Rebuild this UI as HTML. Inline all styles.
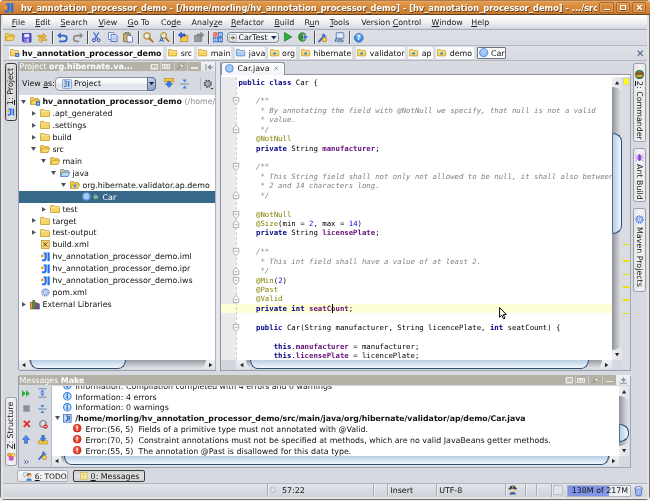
<!DOCTYPE html><html><head><meta charset='utf-8'><title>hv_annotation_processor_demo</title><style>
html,body{margin:0;padding:0;}
body{width:650px;height:501px;overflow:hidden;position:relative;background:#d6d9df;will-change:transform;font-family:'DejaVu Sans','Liberation Sans',sans-serif; font-size:7.9px;color:#1a1a1a;}
.a{position:absolute;}
.t{position:absolute;white-space:nowrap;line-height:10px;height:10px;}
.b{font-weight:bold;}
u{text-decoration:underline;}
.code{position:absolute;white-space:pre;font-family:'DejaVu Sans Mono','Liberation Mono',monospace; font-size:7.33px;line-height:9.43px;height:9.43px;color:#000;left:238.4px;}
.kw{color:#000080;font-weight:bold;}
.an{color:#808000;}
.fd{color:#660e7a;font-weight:bold;}
.cm{color:#808080;font-style:italic;}
.nm{color:#0000ff;}
.sep{position:absolute;width:1px;background:#8d929c;box-shadow:1px 0 0 #f4f5f7;}
.nav{position:absolute;top:47px;height:12px;background:#fbfbfc;border-radius:1px;}
svg{position:absolute;overflow:visible;}
</style></head><body>
<div class='a' style='left:0px;top:0px;width:650px;height:501px;background:#f3f3f3;'></div>
<div class='a' style='left:0.2px;top:0px;width:649.5px;height:499.8px;box-sizing:border-box;border:0.7px solid #707070;border-radius:4px;background:#d6d9df;'></div>
<div class='a' style='left:2.8px;top:15px;width:644.4px;height:14px;background:linear-gradient(#ffffff,#f4f5f7 40%,#dadde3 90%,#c9cdd5);'></div>
<div class='a' style='left:2.8px;top:29px;width:644.4px;height:1px;background:#a8adb8;'></div>
<div class='a' style='left:2.8px;top:30px;width:644.4px;height:15px;background:linear-gradient(#dcdfe5,#d7dae0);'></div>
<div class='a' style='left:2.8px;top:45px;width:644.4px;height:1px;background:#b4b9c3;'></div>
<div class='a' style='left:2.8px;top:46px;width:644.4px;height:13.7px;background:linear-gradient(#dde0e6,#d7dae0);'></div>
<div class='a' style='left:2.8px;top:59.7px;width:644.4px;height:0.9px;background:#b3b7c1;'></div>
<div class='a' style='left:2.8px;top:60.6px;width:644.4px;height:1.3px;background:#d9dce2;'></div>
<div class='a' style='left:1px;top:15px;width:1.8px;height:484px;background:#e4e4e4;'></div>
<div class='a' style='left:647.2px;top:15px;width:1.8px;height:484px;background:#e4e4e4;'></div>
<div class='a' style='left:1px;top:497.4px;width:648px;height:1.7px;background:#e4e4e4;border-radius:0 0 3px 3px;'></div>
<div class='a' style='left:0.2px;top:0px;width:649.5px;height:15px;background:linear-gradient(#6b4a2a 0,#f1ae6a 1px,#e09a50 2px,#d98c3c 6px,#d08234 11px,#c67a2e 13.5px,#5a3c20 14.6px);border-radius:4px 4px 0 0;'></div>
<svg style='left:4.2px;top:2.6px' width='10' height='10' viewBox='0 0 10 10'><path d='M2.4 0.3h3.4v6.3c0 2-1.2 3-3.1 3h-2v-2h1.7c.8 0 1.1-.4 1.1-1.1v-4.3h-1.1z' fill='#1f6df2'/><rect x='6.8' y='0.3' width='2.5' height='9.3' fill='#1f6df2'/><rect x='0.2' y='3' width='2.7' height='2.8' fill='#f59a1c'/></svg>
<div class='a' style='left:21px;top:2.6px;width:576px;height:11px;overflow:hidden;white-space:nowrap;font-weight:bold;color:#fff;font-size:8.25px;line-height:10px;text-shadow:0.6px 0.8px 0.5px #5a3a18;'>hv_annotation_processor_demo - [/home/morling/hv_annotation_processor_demo] - [hv_annotation_processor_demo] - .../src/main</div>
<div class='a' style='left:599.3px;top:2.2px;width:14.7px;height:10.7px;box-sizing:border-box;border:0.8px solid #a5652a;border-radius:2px;background:linear-gradient(#dc9044,#cb7e32);box-shadow:inset 0 0 0 0.8px rgba(240,180,120,0.75);'></div>
<div class='a' style='left:615.8px;top:2.2px;width:14.4px;height:10.7px;box-sizing:border-box;border:0.8px solid #a5652a;border-radius:2px;background:linear-gradient(#dc9044,#cb7e32);box-shadow:inset 0 0 0 0.8px rgba(240,180,120,0.75);'></div>
<div class='a' style='left:632px;top:2.2px;width:14.4px;height:10.7px;box-sizing:border-box;border:0.8px solid #a5652a;border-radius:2px;background:linear-gradient(#dc9044,#cb7e32);box-shadow:inset 0 0 0 0.8px rgba(240,180,120,0.75);'></div>
<div class='a' style='left:603.6px;top:8.9px;width:6px;height:1.5px;background:#fff;box-shadow:0 0.6px 0.4px #6a4018;'></div>
<div class='a' style='left:619.8px;top:4.6px;width:6.3px;height:5.6px;box-sizing:border-box;border:1.2px solid #fff;border-top-width:1.6px;box-shadow:0 0.6px 0.4px #6a4018;'></div>
<svg style='left:636px;top:4.2px' width='7' height='7' viewBox='0 0 7 7'><path d='M1 1l5 5M6 1l-5 5' stroke='#6a4018' stroke-width='1.6' transform='translate(0.3,0.5)'/><path d='M1 1l5 5M6 1l-5 5' stroke='#fff' stroke-width='1.5'/></svg>
<div class='t' style='left:11.8px;top:18.2px;color:#222;'><u>F</u>ile</div>
<div class='t' style='left:35.2px;top:18.2px;color:#222;'><u>E</u>dit</div>
<div class='t' style='left:60.6px;top:18.2px;color:#222;'><u>S</u>earch</div>
<div class='t' style='left:98.6px;top:18.2px;color:#222;'><u>V</u>iew</div>
<div class='t' style='left:127.6px;top:18.2px;color:#222;'><u>G</u>o To</div>
<div class='t' style='left:161px;top:18.2px;color:#222;'>Co<u>d</u>e</div>
<div class='t' style='left:191.6px;top:18.2px;color:#222;'>Analy<u>z</u>e</div>
<div class='t' style='left:231px;top:18.2px;color:#222;'><u>R</u>efactor</div>
<div class='t' style='left:274.4px;top:18.2px;color:#222;'><u>B</u>uild</div>
<div class='t' style='left:304.4px;top:18.2px;color:#222;'>R<u>u</u>n</div>
<div class='t' style='left:329.8px;top:18.2px;color:#222;'><u>T</u>ools</div>
<div class='t' style='left:361.2px;top:18.2px;color:#222;'>Version <u>C</u>ontrol</div>
<div class='t' style='left:431.6px;top:18.2px;color:#222;'><u>W</u>indow</div>
<div class='t' style='left:471.2px;top:18.2px;color:#222;'><u>H</u>elp</div>
<div class='sep' style='left:52.2px;top:30.8px;height:13.4px;background:#4d5057;box-shadow:1px 0 0 #f2f3f6;'></div>
<div class='sep' style='left:87.2px;top:30.8px;height:13.4px;background:#4d5057;box-shadow:1px 0 0 #f2f3f6;'></div>
<div class='sep' style='left:138.4px;top:30.8px;height:13.4px;background:#4d5057;box-shadow:1px 0 0 #f2f3f6;'></div>
<div class='sep' style='left:173.4px;top:30.8px;height:13.4px;background:#4d5057;box-shadow:1px 0 0 #f2f3f6;'></div>
<div class='sep' style='left:208px;top:30.8px;height:13.4px;background:#4d5057;box-shadow:1px 0 0 #f2f3f6;'></div>
<div class='sep' style='left:313.8px;top:30.8px;height:13.4px;background:#4d5057;box-shadow:1px 0 0 #f2f3f6;'></div>
<div class='sep' style='left:349.4px;top:30.8px;height:13.4px;background:#4d5057;box-shadow:1px 0 0 #f2f3f6;'></div>
<svg style='left:5px;top:33px' width='10' height='8' viewBox='0 0 10 8'><path d='M0.5 7.5V1.2q0-.7.7-.7h2.3l1 1.1h3.4q.6 0 .6.6V3' fill='#f3cf5e' stroke='#c39a2c' stroke-width='0.8'/><path d='M0.6 7.5L2.4 3.2h7.4L8 7.5z' fill='#f6d465' stroke='#c39a2c' stroke-width='0.8' stroke-linejoin='round'/></svg>
<svg style='left:22px;top:32.5px' width='9.5' height='9.5' viewBox='0 0 9.5 9.5'><path d='M0.5 0.5h8.5v8.5h-7.6l-.9-.9z' fill='#5b55d6' stroke='#2f2a9c' stroke-width='0.8'/><rect x='2.2' y='0.9' width='5' height='3.4' fill='#e9e9ff'/><rect x='2.6' y='5.8' width='4.2' height='3' fill='#cfcff5'/><rect x='3.3' y='6.3' width='1.3' height='2' fill='#4038b8'/></svg>
<svg style='left:37px;top:32.5px' width='10.5' height='10' viewBox='0 0 10.5 10'><path d='M1 3.6h5.2v-1.9l3.3 2.7-3.3 2.6v-1.8h-5.2z' fill='#f2bd2e' stroke='#b98414' stroke-width='0.6' transform='translate(0,-1.2)'/><path d='M9.6 3.6h-5.2v-1.9l-3.3 2.7 3.3 2.6v-1.8h5.2z' fill='#f7cf55' stroke='#b98414' stroke-width='0.6' transform='translate(0,2.4)'/></svg>
<svg style='left:57px;top:32px' width='10.5' height='10.5' viewBox='0 0 10.5 10.5'><path d='M3.2 3.6h3.4c2.2 0 3.2 1.2 3.2 2.9s-1.1 2.9-3.2 2.9h-4.6' fill='none' stroke='#2a62c9' stroke-width='1.7'/><path d='M0.2 3.6l3.6-3.2v6.4z' fill='#2a62c9'/></svg>
<svg style='left:72.5px;top:32px' width='10.5' height='10.5' viewBox='0 0 10.5 10.5'><g transform='translate(10.5,0) scale(-1,1)'><path d='M3.2 3.6h3.4c2.2 0 3.2 1.2 3.2 2.9s-1.1 2.9-3.2 2.9h-2.2' fill='none' stroke='#8c8c8c' stroke-width='1.7'/><path d='M0.2 3.6l3.6-3.2v6.4z' fill='#8c8c8c'/></g></svg>
<svg style='left:92.3px;top:32px' width='8.5' height='10.5' viewBox='0 0 8.5 10.5'><path d='M1.6 0.3l4.2 6.6M6.9 0.3l-4.2 6.6' stroke='#3a66c8' stroke-width='1.1' fill='none'/><circle cx='1.9' cy='8.2' r='1.5' fill='none' stroke='#2850b0' stroke-width='1'/><circle cx='6.6' cy='8.2' r='1.5' fill='none' stroke='#2850b0' stroke-width='1'/></svg>
<svg style='left:108px;top:32.3px' width='9.5' height='10' viewBox='0 0 9.5 10'><path d='M0.5 0.5h4.6l1.4 1.4v5.6h-6z' fill='#fff' stroke='#4a6cc0' stroke-width='0.8'/><path d='M3 2.6h4.6l1.4 1.4v5.5h-6z' fill='#e8efff' stroke='#3458b0' stroke-width='0.8'/><path d='M4.2 5h3.4M4.2 6.4h3.4M4.2 7.8h3.4' stroke='#6a86d0' stroke-width='0.5'/></svg>
<svg style='left:123px;top:32px' width='10' height='10.5' viewBox='0 0 10 10.5'><rect x='0.5' y='1.2' width='7' height='8.6' rx='0.8' fill='#d9b25a' stroke='#8c6a20' stroke-width='0.8'/><rect x='2.2' y='0.3' width='3.6' height='1.8' fill='#9aa' stroke='#566' stroke-width='0.5'/><path d='M4 3.6h4.2l1.3 1.3v5.1h-5.5z' fill='#f4f7ff' stroke='#3a5cb0' stroke-width='0.7'/></svg>
<svg style='left:143px;top:32px' width='10.5' height='10.5' viewBox='0 0 10.5 10.5'><circle cx='4' cy='4' r='3.1' fill='#cfe6ff' stroke='#c8921e' stroke-width='1.3'/><path d='M6.3 6.3l3.4 3.4' stroke='#b07814' stroke-width='1.9' stroke-linecap='round'/><circle cx='3.6' cy='3.4' r='1.2' fill='#fff' opacity='.8'/></svg>
<svg style='left:159px;top:32px' width='10.5' height='10.5' viewBox='0 0 10.5 10.5'><circle cx='4.6' cy='3.6' r='2.9' fill='#cfe6ff' stroke='#c8921e' stroke-width='1.2'/><path d='M6.6 5.8l3 3.3' stroke='#b07814' stroke-width='1.7' stroke-linecap='round'/><path d='M0.6 10l1.9-5 1.9 5M1.2 8.4h2.6' stroke='#2a58c0' stroke-width='0.9' fill='none'/></svg>
<svg style='left:178px;top:32.3px' width='10.5' height='10' viewBox='0 0 10.5 10'><rect x='2.6' y='3.6' width='7.2' height='6' fill='#f4c94a' stroke='#b98a1c' stroke-width='0.7'/><path d='M0.3 3l3.3-2.9v1.8h3.6v2.3h-3.6v1.8z' fill='#3b5fd8' stroke='#1e3a9c' stroke-width='0.5'/></svg>
<svg style='left:193.5px;top:32.3px' width='10.5' height='10' viewBox='0 0 10.5 10'><rect x='0.6' y='3.6' width='7.2' height='6' fill='#9a9a9a' stroke='#7a7a7a' stroke-width='0.7'/><path d='M10 3l-3.3-2.9v1.8h-3.6v2.3h3.6v1.8z' fill='#8c8c8c' stroke='#707070' stroke-width='0.5'/></svg>
<svg style='left:213px;top:32px' width='10' height='10.5' viewBox='0 0 10 10.5'><rect x='0.4' y='0.4' width='4' height='4' fill='#e8402c'/><path d='M1 1l2.8 2.8M3.8 1l-2.8 2.8' stroke='#ffd0c0' stroke-width='0.7'/><rect x='5.2' y='0.4' width='4.4' height='4.4' fill='#5a96ea' stroke='#2a58b0' stroke-width='0.5'/><rect x='0.4' y='5.6' width='4.2' height='4.4' fill='#5a96ea' stroke='#2a58b0' stroke-width='0.5'/><rect x='5.4' y='5.6' width='4.2' height='4.4' fill='#4a86e0' stroke='#2a58b0' stroke-width='0.5'/><path d='M6.4 1.4v2.4M8.2 1.4v2.4M1.6 6.6v2.4M3.4 6.6v2.4M6.6 6.6v2.4M8.4 6.6v2.4' stroke='#fff' stroke-width='0.7'/></svg>
<div class='a' style='left:226.8px;top:32.4px;width:51.8px;height:10.2px;box-sizing:border-box;border:0.8px solid #7f8794;border-radius:3.5px;background:linear-gradient(#fdfdfe,#eef0f4 50%,#dfe2e8);box-shadow:0 0.7px 0 #f3f4f6;'></div>
<svg style='left:228.6px;top:33.6px' width='7.6' height='7.6' viewBox='0 0 6.6 6.6'><rect x='0.3' y='0.3' width='6' height='6' rx='1' fill='#eef2f6' stroke='#8a98a8' stroke-width='0.6'/><path d='M1.2 3.3l2-1.6v3.2z' fill='#3a9a3a'/><path d='M5.4 3.3l-2-1.6v3.2z' fill='#d04030'/></svg>
<div class='t' style='left:238.4px;top:33.1px;color:#222;font-size:7.9px;'>CarTest</div>
<svg style='left:271.2px;top:35.8px' width='5.6' height='3.8' viewBox='0 0 6 4'><path d='M0 0h6l-3 3.6z' fill='#1f2f55'/></svg>
<svg style='left:284px;top:32.4px' width='8.5' height='9.8' viewBox='0 0 8.5 9.8'><path d='M0.5 0.5l7.4 4.4-7.4 4.4z' fill='#2fae3a' stroke='#1b7a25' stroke-width='0.7' stroke-linejoin='round'/></svg>
<svg style='left:298px;top:32.3px' width='11.5' height='10' viewBox='0 0 11.5 10'><ellipse cx='4.4' cy='5' rx='3.7' ry='4.2' fill='#49a84a' stroke='#1f6a28' stroke-width='0.8'/><path d='M2.2 2.2l4.4 5.6M6.6 2.2l-4.4 5.6M0.8 5h7.2' stroke='#1f5a28' stroke-width='0.6'/><path d='M5.6 2.2l5.2 2.8-5.2 2.8z' fill='#3a6ed8' stroke='#fff' stroke-width='0.5'/></svg>
<svg style='left:318px;top:32px' width='10.5' height='10.5' viewBox='0 0 10.5 10.5'><path d='M1.2 9.4l5.4-6' stroke='#3a62c0' stroke-width='2' stroke-linecap='round'/><path d='M5.2 1.6a2.4 2.4 0 1 0 3.6 2.6l-1.7.3-.8-1 .6-1.6z' fill='#4a74d0'/><circle cx='6.4' cy='7.6' r='2.3' fill='#f2c23a' stroke='#a87a14' stroke-width='0.6'/><circle cx='6.4' cy='7.6' r='0.8' fill='#fff6d0'/></svg>
<svg style='left:334px;top:32px' width='10.5' height='10.5' viewBox='0 0 10.5 10.5'><path d='M1.2 9.6l2-5.6' stroke='#3a62c0' stroke-width='1.4'/><rect x='2.2' y='0.6' width='7.6' height='5.8' rx='0.6' fill='#b9cdf0' stroke='#54709c' stroke-width='0.7'/><rect x='3.2' y='1.6' width='5.6' height='3.6' fill='#e6eefc'/><rect x='4' y='7' width='4.4' height='1.2' fill='#6a86b0'/><rect x='3' y='8.4' width='6.6' height='1.6' fill='#8aa0c8' stroke='#54709c' stroke-width='0.4'/></svg>
<svg style='left:354px;top:32.5px' width='9.6' height='9.6' viewBox='0 0 9.6 9.6'><circle cx='4.8' cy='4.8' r='4.3' fill='#3f8ee8' stroke='#1e58b0' stroke-width='0.8'/><circle cx='4.8' cy='3.6' r='3' fill='#8cc4ff' opacity='.55'/><text x='4.8' y='7.3' font-size='6.8' font-weight='bold' fill='#fff' text-anchor='middle' font-family='DejaVu Sans,Liberation Sans,sans-serif'>?</text></svg>
<div class='nav' style='left:9px;width:154px;'></div>
<svg style='left:10.4px;top:48.9px' width='9.2' height='7.4' viewBox='0 0 10 8'><path d='M0.5 7.5V1.2q0-.7.7-.7h2.4l1 1.2h4.2q.7 0 .7.7v5.1z' fill='#f6d465' stroke='#c39a2c' stroke-width='0.8' stroke-linejoin='round'/><path d='M1 2.6h8.2' stroke='#fdf0b8' stroke-width='0.7'/><rect x='6.2' y='4.8' width='3.6' height='3.6' fill='#2d7be0' stroke='#1b55a8' stroke-width='0.5'/><rect x='7.2' y='5.8' width='1.6' height='1.6' fill='#cfe4ff'/></svg>
<div class='t' style='left:22px;top:48.7px;font-weight:bold;color:#111;'>hv_annotation_processor_demo</div>
<div class='nav' style='left:167px;width:27px;'></div>
<svg style='left:168.4px;top:48.9px' width='9.2' height='7.4' viewBox='0 0 10 8'><path d='M0.5 7.5V1.2q0-.7.7-.7h2.4l1 1.2h4.2q.7 0 .7.7v5.1z' fill='#f6d465' stroke='#c39a2c' stroke-width='0.8' stroke-linejoin='round'/><path d='M1 2.6h8.2' stroke='#fdf0b8' stroke-width='0.7'/></svg>
<div class='t' style='left:180.7px;top:48.7px;color:#111;'>src</div>
<div class='nav' style='left:197px;width:34px;'></div>
<svg style='left:198.4px;top:48.9px' width='9.2' height='7.4' viewBox='0 0 10 8'><path d='M0.5 7.5V1.2q0-.7.7-.7h2.4l1 1.2h4.2q.7 0 .7.7v5.1z' fill='#f6d465' stroke='#c39a2c' stroke-width='0.8' stroke-linejoin='round'/><path d='M1 2.6h8.2' stroke='#fdf0b8' stroke-width='0.7'/></svg>
<div class='t' style='left:210.7px;top:48.7px;color:#111;'>main</div>
<div class='nav' style='left:235px;width:30px;'></div>
<svg style='left:236.4px;top:48.9px' width='9.2' height='7.4' viewBox='0 0 10 8'><path d='M0.5 7.5V1.2q0-.7.7-.7h2.4l1 1.2h4.2q.7 0 .7.7v5.1z' fill='#a9cdf5' stroke='#4b82c4' stroke-width='0.8' stroke-linejoin='round'/><path d='M1 2.6h8.2' stroke='#fdf0b8' stroke-width='0.7'/></svg>
<div class='t' style='left:248.7px;top:48.7px;color:#111;'>java</div>
<div class='nav' style='left:268.4px;width:27.6px;'></div>
<svg style='left:269.8px;top:48.9px' width='9.2' height='7.4' viewBox='0 0 10 8'><path d='M0.5 7.5V1.2q0-.7.7-.7h2.4l1 1.2h4.2q.7 0 .7.7v5.1z' fill='#f6d465' stroke='#c39a2c' stroke-width='0.8' stroke-linejoin='round'/><path d='M1 2.6h8.2' stroke='#fdf0b8' stroke-width='0.7'/><circle cx='5' cy='5' r='1.5' fill='#4a8ee0'/></svg>
<div class='t' style='left:282.1px;top:48.7px;color:#111;'>org</div>
<div class='nav' style='left:299.6px;width:52.4px;'></div>
<svg style='left:301px;top:48.9px' width='9.2' height='7.4' viewBox='0 0 10 8'><path d='M0.5 7.5V1.2q0-.7.7-.7h2.4l1 1.2h4.2q.7 0 .7.7v5.1z' fill='#f6d465' stroke='#c39a2c' stroke-width='0.8' stroke-linejoin='round'/><path d='M1 2.6h8.2' stroke='#fdf0b8' stroke-width='0.7'/><circle cx='5' cy='5' r='1.5' fill='#4a8ee0'/></svg>
<div class='t' style='left:313.3px;top:48.7px;color:#111;'>hibernate</div>
<div class='nav' style='left:356px;width:49px;'></div>
<svg style='left:357.4px;top:48.9px' width='9.2' height='7.4' viewBox='0 0 10 8'><path d='M0.5 7.5V1.2q0-.7.7-.7h2.4l1 1.2h4.2q.7 0 .7.7v5.1z' fill='#f6d465' stroke='#c39a2c' stroke-width='0.8' stroke-linejoin='round'/><path d='M1 2.6h8.2' stroke='#fdf0b8' stroke-width='0.7'/><circle cx='5' cy='5' r='1.5' fill='#4a8ee0'/></svg>
<div class='t' style='left:369.7px;top:48.7px;color:#111;'>validator</div>
<div class='nav' style='left:408px;width:25px;'></div>
<svg style='left:409.4px;top:48.9px' width='9.2' height='7.4' viewBox='0 0 10 8'><path d='M0.5 7.5V1.2q0-.7.7-.7h2.4l1 1.2h4.2q.7 0 .7.7v5.1z' fill='#f6d465' stroke='#c39a2c' stroke-width='0.8' stroke-linejoin='round'/><path d='M1 2.6h8.2' stroke='#fdf0b8' stroke-width='0.7'/><circle cx='5' cy='5' r='1.5' fill='#4a8ee0'/></svg>
<div class='t' style='left:421.7px;top:48.7px;color:#111;'>ap</div>
<div class='nav' style='left:436px;width:38px;'></div>
<svg style='left:437.4px;top:48.9px' width='9.2' height='7.4' viewBox='0 0 10 8'><path d='M0.5 7.5V1.2q0-.7.7-.7h2.4l1 1.2h4.2q.7 0 .7.7v5.1z' fill='#f6d465' stroke='#c39a2c' stroke-width='0.8' stroke-linejoin='round'/><path d='M1 2.6h8.2' stroke='#fdf0b8' stroke-width='0.7'/><circle cx='5' cy='5' r='1.5' fill='#4a8ee0'/></svg>
<div class='t' style='left:449.7px;top:48.7px;color:#111;'>demo</div>
<div class='a' style='left:476.6px;top:46.6px;width:29px;height:12.6px;box-sizing:border-box;border:0.8px solid #6d7480;background:#fbfbfc;border-radius:1px;'></div>
<svg style='left:479.4px;top:48.4px' width='9.4' height='9.4' viewBox='0 0 9 9'><circle cx='4.5' cy='4.5' r='4' fill='#86b6f0' stroke='#4a8ae0' stroke-width='0.8'/><circle cx='4.5' cy='3.6' r='2.6' fill='#b8d6f8' opacity='.6'/><path d='M6.1 3.3a2 2 0 1 0 0 2.4' fill='none' stroke='#fff' stroke-width='1.1'/><path d='M6.1 3.3a2 2 0 1 0 0 2.4' fill='none' stroke='#3a7ad8' stroke-width='0.55'/></svg>
<div class='t' style='left:491px;top:48.9px;color:#111;'>Car</div>
<svg style='left:637.2px;top:49.6px' width='6.4' height='6.4' viewBox='0 0 6.4 6.4'><path d='M0.6 0.6l5.2 5.2M5.8 0.6l-5.2 5.2' stroke='#4a648c' stroke-width='1.1'/></svg>
<div class='a' style='left:5.3px;top:62.8px;width:11.7px;height:58.2px;box-sizing:border-box;border:0.9px solid #3c3c3c;border-radius:2.5px;background:linear-gradient(90deg,#cfcfcf,#e4e4e4 50%,#d2d2d2);'></div>
<div class='a' style='left:11.15px;top:91.9px;width:0;height:0;'><div style='position:absolute;white-space:nowrap;line-height:10px;height:10px;width:58.2px;left:-29.1px;top:-5px;transform:rotate(-90deg);text-align:left;color:#111;font-size:7.9px;'></div></div>
<div class='a' style='left:11.2px;top:105px;width:0;height:0;'><div style='position:absolute;white-space:nowrap;line-height:10px;height:10px;left:0;top:-5px;transform-origin:0 50%;transform:rotate(-90deg);color:#111;font-size:7.9px;'><u>1</u>: Project</div></div>
<svg style='left:7.2px;top:107.6px' width='8' height='8' viewBox='0 0 8 8'><path d='M1.6 0.6h3v4.6c0 1.5-.8 2.2-2.2 2.2h-1.6v-1.4h1.4c.6 0 .9-.3.9-.9v-3.1h-1.5z' fill='#1e6cf0'/><rect x='5.6' y='0.6' width='1.5' height='6.8' fill='#1e6cf0'/><rect x='0.6' y='2.6' width='1.9' height='1.9' fill='#f39a1e'/></svg>
<div class='a' style='left:18.4px;top:61.9px;width:0.8px;height:307.9px;background:#9aa0ab;'></div>
<div class='a' style='left:19px;top:61.9px;width:182.4px;height:9.3px;background:#b4b2a7;'></div>
<div class='a' style='left:201.4px;top:61.9px;width:14px;height:9.3px;background:#dcdfe5;'></div>
<div class='t' style='left:19.6px;top:62.2px;color:#fff;font-size:7.9px;'>Project <b>org.hibernate.va...</b></div>
<div class='a' style='left:159.8px;top:62.2px;width:0.9px;height:8.6px;background:#cdcbc2;'></div>
<div class='a' style='left:173.6px;top:62.2px;width:0.9px;height:8.6px;background:#cdcbc2;'></div>
<div class='a' style='left:187px;top:62.2px;width:0.9px;height:8.6px;background:#cdcbc2;'></div>
<div class='a' style='left:150.8px;top:63.7px;width:7px;height:5.6px;box-sizing:border-box;border:0.7px solid #ecebe6;background:#c4c2b8;box-shadow:-0.6px 0.7px 0 #dddcd5;'></div>
<div class='a' style='left:162.4px;top:63.9px;width:7.6px;height:5.2px;box-sizing:border-box;border:0.7px solid #ecebe6;background:#c2c0b6;'></div>
<div class='a' style='left:164.4px;top:65.4px;width:3.6px;height:2.2px;box-sizing:border-box;border:0.5px solid #e4e3dd;'></div>
<svg style='left:177.2px;top:63.4px' width='7' height='6.6' viewBox='0 0 7 6.6'><path d='M0.5 6.2l2.6-2.6' stroke='#6a6960' stroke-width='0.8'/><path d='M2.6 2.2l2.2 2.2M4 0.6l2.2 2.2' stroke='#5a5950' stroke-width='0.7'/><path d='M3 2.6l1.6-1.4 1.4 1.4-1.4 1.6z' fill='#efeeea'/></svg>
<div class='a' style='left:190.8px;top:67px;width:7.2px;height:1.7px;background:#e9e8e3;'></div>
<div class='a' style='left:201.4px;top:61.9px;width:14px;height:9.3px;background:linear-gradient(#f1f2f5,#e6e8ec);'></div>
<svg style='left:205.4px;top:63.8px' width='8.6' height='6.6' viewBox='0 0 8.6 6.6'><path d='M8.4 3.3h-5M5.4 1l-2.4 2.3 2.4 2.3z' stroke='#868c96' fill='#868c96' stroke-width='0.9'/><path d='M1 0.2v6.2' stroke='#868c96' stroke-width='1'/></svg>
<div class='t' style='left:22px;top:79.1px;color:#111;'>View <u>a</u>s:</div>
<div class='a' style='left:55.4px;top:76.9px;width:101px;height:13.7px;box-sizing:border-box;border:0.8px solid #8a92a0;border-radius:4px;background:linear-gradient(#ffffff,#f2f4f7 45%,#dfe3ea 55%,#e6e9ee);box-shadow:0 0.8px 0 #eceef2;'></div>
<div class='a' style='left:146.6px;top:76.9px;width:9.8px;height:13.7px;box-sizing:border-box;border:0.8px solid #5d6f8c;border-radius:0 4px 4px 0;background:linear-gradient(#c4d3e6,#a3b8d3 50%,#8ea6c6);'></div>
<svg style='left:149px;top:82.2px' width='5' height='3.4' viewBox='0 0 5 3.4'><path d='M0 0h5l-2.5 3.2z' fill='#1c2433'/></svg>
<svg style='left:62px;top:78.8px' width='10' height='10' viewBox='0 0 10 10'><rect x='0.5' y='0.5' width='9' height='9' rx='1' fill='#cfe0f6' stroke='#6f94c8' stroke-width='0.7'/><path d='M2.2 2h2v4c0 1-.6 1.6-1.6 1.6h-.6' fill='none' stroke='#3a74d0' stroke-width='1.1'/><rect x='5.8' y='2' width='1.5' height='5.8' fill='#3a74d0'/><rect x='2' y='3.6' width='1.6' height='1.6' fill='#f0a030'/></svg>
<div class='t' style='left:74px;top:79.1px;color:#111;'>Project</div>
<svg style='left:164px;top:78.2px' width='10.5' height='10' viewBox='0 0 10.5 10'><rect x='0.4' y='0.4' width='9.4' height='3.4' fill='#f4c83e' stroke='#b98a1c' stroke-width='0.6'/><path d='M5 9.6l-3.6-4h2.2v-2.2h2.8v2.2h2.2z' fill='#3b7be0' stroke='#1e4ea8' stroke-width='0.5'/></svg>
<svg style='left:180px;top:78.6px' width='9.4' height='10' viewBox='0 0 9.4 10'><path d='M0.4 5h8.6' stroke='#6b7f9c' stroke-width='0.9'/><path d='M4.7 3.6l-2.2-3h4.4zM4.7 6.4l-2.2 3h4.4z' fill='#3b8be0'/></svg>
<svg style='left:202.8px;top:79.2px' width='10.6' height='11' viewBox='0 0 10.6 11'><circle cx='4.8' cy='4.8' r='3.2' fill='none' stroke='#4a4f58' stroke-width='1.9' stroke-dasharray='1.5 1'/><circle cx='4.8' cy='4.8' r='2.6' fill='#cfd3da' stroke='#4a4f58' stroke-width='0.8'/><circle cx='4.8' cy='4.8' r='1.1' fill='#f2f3f5' stroke='#4a4f58' stroke-width='0.6'/><path d='M7.6 9h2.8l-1.4 1.6z' fill='#222'/></svg>
<div class='a' style='left:200px;top:78px;width:0.8px;height:11.6px;background:#b4b8c2;'></div>
<div class='a' style='left:19px;top:95.4px;width:196.4px;height:264.6px;background:#fff;'></div>
<div class='a' style='left:215.4px;top:61.9px;width:0.6px;height:307.9px;background:#aeb3bd;'></div>
<div class='a' style='left:19px;top:95.4px;width:196.4px;height:264.6px;overflow:hidden;'><div class='a' style='left:-19px;top:-95.4px;width:650px;height:501px;'>
<svg style='left:20.9px;top:99.765px' width='5' height='4' viewBox='0 0 5 4'><path d='M0 0h5l-2.5 4z' fill='#4f555e'/></svg>
<svg style='left:30px;top:97.365px' width='10' height='8' viewBox='0 0 10 8'><path d='M0.5 7.5V1.2q0-.7.7-.7h2.3l1 1.1h3.4q.6 0 .6.6V3' fill='#f3cf5e' stroke='#c39a2c' stroke-width='0.8'/><path d='M0.6 7.5L2.4 3.2h7.4L8 7.5z' fill='#f6d465' stroke='#c39a2c' stroke-width='0.8' stroke-linejoin='round'/><rect x='6.2' y='4.8' width='3.6' height='3.6' fill='#2d7be0' stroke='#1b55a8' stroke-width='0.5'/><rect x='7.2' y='5.8' width='1.6' height='1.6' fill='#cfe4ff'/></svg>
<div class='t' style='left:42.4px;top:97.265px;color:#111;font-size:7.9px;'><b>hv_annotation_processor_demo</b> <span style='color:#8c8c8c'>(/home/morling/hv_annotation_processor_demo)</span></div>
<svg style='left:31.6px;top:111.095px' width='4' height='4.8' viewBox='0 0 4 4.8'><path d='M0 0v4.8l4-2.4z' fill='#4f555e'/></svg>
<svg style='left:40px;top:109.295px' width='10' height='8' viewBox='0 0 10 8'><path d='M0.5 7.5V1.2q0-.7.7-.7h2.4l1 1.2h4.2q.7 0 .7.7v5.1z' fill='#f6d465' stroke='#c39a2c' stroke-width='0.8' stroke-linejoin='round'/><path d='M1 2.6h8.2' stroke='#fdf0b8' stroke-width='0.7'/></svg>
<div class='t' style='left:52.4px;top:109.195px;color:#111;font-size:7.9px;'>.apt_generated</div>
<svg style='left:31.6px;top:123.025px' width='4' height='4.8' viewBox='0 0 4 4.8'><path d='M0 0v4.8l4-2.4z' fill='#4f555e'/></svg>
<svg style='left:40px;top:121.225px' width='10' height='8' viewBox='0 0 10 8'><path d='M0.5 7.5V1.2q0-.7.7-.7h2.4l1 1.2h4.2q.7 0 .7.7v5.1z' fill='#f6d465' stroke='#c39a2c' stroke-width='0.8' stroke-linejoin='round'/><path d='M1 2.6h8.2' stroke='#fdf0b8' stroke-width='0.7'/></svg>
<div class='t' style='left:52.4px;top:121.125px;color:#111;font-size:7.9px;'>.settings</div>
<svg style='left:31.6px;top:134.955px' width='4' height='4.8' viewBox='0 0 4 4.8'><path d='M0 0v4.8l4-2.4z' fill='#4f555e'/></svg>
<svg style='left:40px;top:133.155px' width='10' height='8' viewBox='0 0 10 8'><path d='M0.5 7.5V1.2q0-.7.7-.7h2.4l1 1.2h4.2q.7 0 .7.7v5.1z' fill='#f6d465' stroke='#c39a2c' stroke-width='0.8' stroke-linejoin='round'/><path d='M1 2.6h8.2' stroke='#fdf0b8' stroke-width='0.7'/></svg>
<div class='t' style='left:52.4px;top:133.055px;color:#111;font-size:7.9px;'>build</div>
<svg style='left:30.9px;top:147.485px' width='5' height='4' viewBox='0 0 5 4'><path d='M0 0h5l-2.5 4z' fill='#4f555e'/></svg>
<svg style='left:40px;top:145.085px' width='10' height='8' viewBox='0 0 10 8'><path d='M0.5 7.5V1.2q0-.7.7-.7h2.3l1 1.1h3.4q.6 0 .6.6V3' fill='#f3cf5e' stroke='#c39a2c' stroke-width='0.8'/><path d='M0.6 7.5L2.4 3.2h7.4L8 7.5z' fill='#f6d465' stroke='#c39a2c' stroke-width='0.8' stroke-linejoin='round'/></svg>
<div class='t' style='left:52.4px;top:144.985px;color:#111;font-size:7.9px;'>src</div>
<svg style='left:40.9px;top:159.415px' width='5' height='4' viewBox='0 0 5 4'><path d='M0 0h5l-2.5 4z' fill='#4f555e'/></svg>
<svg style='left:50px;top:157.015px' width='10' height='8' viewBox='0 0 10 8'><path d='M0.5 7.5V1.2q0-.7.7-.7h2.3l1 1.1h3.4q.6 0 .6.6V3' fill='#f3cf5e' stroke='#c39a2c' stroke-width='0.8'/><path d='M0.6 7.5L2.4 3.2h7.4L8 7.5z' fill='#f6d465' stroke='#c39a2c' stroke-width='0.8' stroke-linejoin='round'/></svg>
<div class='t' style='left:62.4px;top:156.915px;color:#111;font-size:7.9px;'>main</div>
<svg style='left:50.9px;top:171.345px' width='5' height='4' viewBox='0 0 5 4'><path d='M0 0h5l-2.5 4z' fill='#4f555e'/></svg>
<svg style='left:60px;top:168.945px' width='10' height='8' viewBox='0 0 10 8'><path d='M0.5 7.5V1.2q0-.7.7-.7h2.3l1 1.1h3.4q.6 0 .6.6V3' fill='#f3cf5e' stroke='#4b82c4' stroke-width='0.8'/><path d='M0.6 7.5L2.4 3.2h7.4L8 7.5z' fill='#b7d6f8' stroke='#4b82c4' stroke-width='0.8' stroke-linejoin='round'/></svg>
<div class='t' style='left:72.4px;top:168.845px;color:#111;font-size:7.9px;'>java</div>
<svg style='left:60.9px;top:183.275px' width='5' height='4' viewBox='0 0 5 4'><path d='M0 0h5l-2.5 4z' fill='#4f555e'/></svg>
<svg style='left:70px;top:180.875px' width='10' height='8' viewBox='0 0 10 8'><path d='M0.5 7.5V1.2q0-.7.7-.7h2.3l1 1.1h3.4q.6 0 .6.6V3' fill='#f3cf5e' stroke='#c39a2c' stroke-width='0.8'/><path d='M0.6 7.5L2.4 3.2h7.4L8 7.5z' fill='#f6d465' stroke='#c39a2c' stroke-width='0.8' stroke-linejoin='round'/><circle cx='5' cy='5' r='1.5' fill='#4a8ee0'/></svg>
<div class='t' style='left:82.4px;top:180.775px;color:#111;font-size:7.9px;'>org.hibernate.validator.ap.demo</div>
<div class='a' style='left:19px;top:190.64px;width:196.4px;height:12.13px;background:#39698a;'></div>
<svg style='left:82px;top:192.405px' width='8.8' height='8.8' viewBox='0 0 9 9'><circle cx='4.5' cy='4.5' r='4' fill='#86b6f0' stroke='#4a8ae0' stroke-width='0.8'/><circle cx='4.5' cy='3.6' r='2.6' fill='#b8d6f8' opacity='.6'/><path d='M6.1 3.3a2 2 0 1 0 0 2.4' fill='none' stroke='#fff' stroke-width='1.1'/><path d='M6.1 3.3a2 2 0 1 0 0 2.4' fill='none' stroke='#3a7ad8' stroke-width='0.55'/></svg>
<svg style='left:93.6px;top:195.405px' width='4.2' height='3.4' viewBox='0 0 4.2 3.4'><rect x='0' y='1.2' width='3.4' height='2.2' fill='#5fc05a' stroke='#d8f0d8' stroke-width='0.4'/><path d='M0.6 1.2v-0.4a1.1 1.1 0 0 1 2.2 0' fill='none' stroke='#cfe' stroke-width='0.5'/></svg>
<div class='t' style='left:102.6px;top:192.705px;color:#fff;font-size:7.9px;'>Car</div>
<svg style='left:41.6px;top:206.535px' width='4' height='4.8' viewBox='0 0 4 4.8'><path d='M0 0v4.8l4-2.4z' fill='#4f555e'/></svg>
<svg style='left:50px;top:204.735px' width='10' height='8' viewBox='0 0 10 8'><path d='M0.5 7.5V1.2q0-.7.7-.7h2.4l1 1.2h4.2q.7 0 .7.7v5.1z' fill='#f6d465' stroke='#c39a2c' stroke-width='0.8' stroke-linejoin='round'/><path d='M1 2.6h8.2' stroke='#fdf0b8' stroke-width='0.7'/></svg>
<div class='t' style='left:62.4px;top:204.635px;color:#111;font-size:7.9px;'>test</div>
<svg style='left:31.6px;top:218.465px' width='4' height='4.8' viewBox='0 0 4 4.8'><path d='M0 0v4.8l4-2.4z' fill='#4f555e'/></svg>
<svg style='left:40px;top:216.665px' width='10' height='8' viewBox='0 0 10 8'><path d='M0.5 7.5V1.2q0-.7.7-.7h2.4l1 1.2h4.2q.7 0 .7.7v5.1z' fill='#f6d465' stroke='#c39a2c' stroke-width='0.8' stroke-linejoin='round'/><path d='M1 2.6h8.2' stroke='#fdf0b8' stroke-width='0.7'/></svg>
<div class='t' style='left:52.4px;top:216.565px;color:#111;font-size:7.9px;'>target</div>
<svg style='left:31.6px;top:230.395px' width='4' height='4.8' viewBox='0 0 4 4.8'><path d='M0 0v4.8l4-2.4z' fill='#4f555e'/></svg>
<svg style='left:40px;top:228.595px' width='10' height='8' viewBox='0 0 10 8'><path d='M0.5 7.5V1.2q0-.7.7-.7h2.4l1 1.2h4.2q.7 0 .7.7v5.1z' fill='#f6d465' stroke='#c39a2c' stroke-width='0.8' stroke-linejoin='round'/><path d='M1 2.6h8.2' stroke='#fdf0b8' stroke-width='0.7'/></svg>
<div class='t' style='left:52.4px;top:228.495px;color:#111;font-size:7.9px;'>test-output</div>
<svg style='left:41px;top:240.125px' width='8.6' height='8.8' viewBox='0 0 8.6 8.8'><rect x='0.4' y='0.4' width='7.8' height='8' fill='#f6d774' stroke='#b98a1c' stroke-width='0.7'/><path d='M2.4 2.4l3.8 4M6.2 2.4l-3.8 4' stroke='#5a3c10' stroke-width='1'/></svg>
<div class='t' style='left:52.4px;top:240.425px;color:#111;font-size:7.9px;'>build.xml</div>
<svg style='left:41px;top:251.755px' width='9' height='9.4' viewBox='0 0 9 9.4'><path d='M2.6 0.4h3.1v6c0 1.9-1.1 2.8-2.9 2.8h-1.7v-1.9h1.5c.7 0 1-.3 1-1v-4.1h-1z' fill='#1f6df2'/><rect x='6.5' y='0.4' width='2.2' height='8.8' fill='#1f6df2'/><rect x='0.1' y='2.6' width='2.5' height='2.6' fill='#f59a1c'/></svg>
<div class='t' style='left:52.4px;top:252.355px;color:#111;font-size:7.9px;'>hv_annotation_processor_demo.iml</div>
<svg style='left:41px;top:263.685px' width='9' height='9.4' viewBox='0 0 9 9.4'><path d='M2.6 0.4h3.1v6c0 1.9-1.1 2.8-2.9 2.8h-1.7v-1.9h1.5c.7 0 1-.3 1-1v-4.1h-1z' fill='#1f6df2'/><rect x='6.5' y='0.4' width='2.2' height='8.8' fill='#1f6df2'/><rect x='0.1' y='2.6' width='2.5' height='2.6' fill='#f59a1c'/></svg>
<div class='t' style='left:52.4px;top:264.285px;color:#111;font-size:7.9px;'>hv_annotation_processor_demo.ipr</div>
<svg style='left:41px;top:275.615px' width='9' height='9.4' viewBox='0 0 9 9.4'><path d='M2.6 0.4h3.1v6c0 1.9-1.1 2.8-2.9 2.8h-1.7v-1.9h1.5c.7 0 1-.3 1-1v-4.1h-1z' fill='#1f6df2'/><rect x='6.5' y='0.4' width='2.2' height='8.8' fill='#1f6df2'/><rect x='0.1' y='2.6' width='2.5' height='2.6' fill='#f59a1c'/></svg>
<div class='t' style='left:52.4px;top:276.215px;color:#111;font-size:7.9px;'>hv_annotation_processor_demo.iws</div>
<svg style='left:41px;top:287.845px' width='8.8' height='8.8' viewBox='0 0 8.8 8.8'><circle cx='4.4' cy='4.4' r='3.5' fill='#dbe6fa' stroke='#5a82d8' stroke-width='1.3' stroke-dasharray='1.2 0.7'/><circle cx='4.4' cy='4.4' r='2.2' fill='#fff' stroke='#5a82d8' stroke-width='0.7'/><circle cx='4.4' cy='4.4' r='0.9' fill='#7aa0e8'/></svg>
<div class='t' style='left:52.4px;top:288.145px;color:#111;font-size:7.9px;'>pom.xml</div>
<svg style='left:21.6px;top:301.975px' width='4' height='4.8' viewBox='0 0 4 4.8'><path d='M0 0v4.8l4-2.4z' fill='#4f555e'/></svg>
<svg style='left:30px;top:299.575px' width='10' height='9.4' viewBox='0 0 10 9.4'><rect x='0.4' y='2.2' width='2' height='6.8' fill='#e0a030' stroke='#6a4a10' stroke-width='0.5'/><rect x='2.8' y='0.4' width='2' height='8.6' fill='#4a9a4a' stroke='#1e4e1e' stroke-width='0.5'/><rect x='5.2' y='2.8' width='2' height='6.2' fill='#d04a3a' stroke='#6a1e14' stroke-width='0.5'/><rect x='7.4' y='3.8' width='2' height='5.2' fill='#4a6ad0' stroke='#1e2e7a' stroke-width='0.5'/></svg>
<div class='t' style='left:42.4px;top:300.075px;color:#111;font-size:7.9px;'>External Libraries</div>
</div></div>
<div class='a' style='left:19px;top:360.2px;width:196.4px;height:9.2px;background:linear-gradient(#eceef1,#e2e4e9);'></div>
<div class='a' style='left:28.6px;top:360.2px;width:177.2px;height:8.6px;background:linear-gradient(#969aa1,#b4b7be 35%,#d4d6db 75%,#e2e4e8);border-radius:0 0 7px 7px / 0 0 9.2px 9.2px;'></div>
<svg style='left:22.4px;top:362.7px' width='3.4' height='4.2' viewBox='0 0 3.4 4.2'><path d='M3.4 0v4.2l-3.4-2.1z' fill='#20242c'/></svg>
<svg style='left:208.6px;top:362.7px' width='3.4' height='4.2' viewBox='0 0 3.4 4.2'><path d='M0 0v4.2l3.4-2.1z' fill='#20242c'/></svg>
<div class='a' style='left:29.6px;top:360.2px;width:96px;height:8.6px;box-sizing:border-box;border:1px solid #2f4f72;border-top:none;border-radius:0 0 8px 8px / 0 0 9.2px 9.2px;background:linear-gradient(#b9cde4,#d4e2f1 50%,#f2f7fc);'></div>
<div class='a' style='left:19px;top:369.6px;width:197px;height:0.7px;background:#9aa0ab;'></div>
<div class='a' style='left:216px;top:61.9px;width:4.4px;height:307.9px;background:#e4e6eb;'></div>
<div class='a' style='left:220.4px;top:61.9px;width:410.6px;height:12.6px;background:linear-gradient(#d8dbe1,#d4d7dd);'></div>
<div class='a' style='left:220.4px;top:61.9px;width:0.8px;height:307.9px;background:#8e939d;'></div>
<div class='a' style='left:630.2px;top:74.4px;width:0.8px;height:295.4px;background:#a2a7b1;'></div>
<div class='a' style='left:221.2px;top:61.9px;width:64.2px;height:13.6px;box-sizing:border-box;border:0.8px solid #8e939d;border-bottom:none;border-radius:3px 3px 0 0;background:linear-gradient(#fdfdfe,#f4f5f7);'></div>
<div class='a' style='left:285.2px;top:74.4px;width:345.8px;height:0.9px;background:#8e939d;'></div>
<div class='a' style='left:221.2px;top:75.3px;width:409px;height:1.4px;background:#fff;'></div>
<div class='a' style='left:221.2px;top:76.6px;width:409px;height:0.8px;background:#d2d2d4;'></div>
<svg style='left:224.8px;top:63.9px' width='8.8' height='8.8' viewBox='0 0 9 9'><circle cx='4.5' cy='4.5' r='4' fill='#86b6f0' stroke='#4a8ae0' stroke-width='0.8'/><circle cx='4.5' cy='3.6' r='2.6' fill='#b8d6f8' opacity='.6'/><path d='M6.1 3.3a2 2 0 1 0 0 2.4' fill='none' stroke='#fff' stroke-width='1.1'/><path d='M6.1 3.3a2 2 0 1 0 0 2.4' fill='none' stroke='#3a7ad8' stroke-width='0.55'/></svg>
<div class='t' style='left:237.6px;top:64.3px;color:#111;'>Car.java</div>
<svg style='left:274.2px;top:66.2px' width='4.6' height='4.6' viewBox='0 0 4.6 4.6'><path d='M0.4 0.4l3.8 3.8M4.2 0.4l-3.8 3.8' stroke='#8a8f98' stroke-width='0.8'/></svg>
<div class='a' style='left:221.2px;top:77.3px;width:390.8px;height:282.7px;background:#fff;'></div>
<div class='a' style='left:221.2px;top:77.3px;width:14.6px;height:282.7px;background:#ebebee;'></div>
<div class='a' style='left:221.2px;top:303.705px;width:391.4px;height:9.43px;background:#ffffd7;'></div>
<div class='a' style='left:235.6px;top:77.3px;width:0px;height:282.7px;border-left:0.8px dashed #cfcfcf;'></div>
<div class='a' style='left:221.2px;top:77.3px;width:390.7px;height:282.7px;overflow:hidden;'><div class='a' style='left:-221.2px;top:-77.3px;width:650px;height:501px;'>
<div class='code' style='top:77.535px;'><span class='kw'>public class</span> Car {</div>
<div class='code' style='top:96.395px;'>    <span class='cm'>/**</span></div>
<div class='code' style='top:105.825px;'>    <span class='cm'> * By annotating the field with @NotNull we specify, that null is not a valid</span></div>
<div class='code' style='top:115.255px;'>    <span class='cm'> * value.</span></div>
<div class='code' style='top:124.685px;'>    <span class='cm'> */</span></div>
<div class='code' style='top:134.115px;'>    <span class='an'>@NotNull</span></div>
<div class='code' style='top:143.545px;'>    <span class='kw'>private</span> String <span class='fd'>manufacturer</span>;</div>
<div class='code' style='top:162.405px;'>    <span class='cm'>/**</span></div>
<div class='code' style='top:171.835px;'>    <span class='cm'> * This String field shall not only not allowed to be null, it shall also between 2 and 14</span></div>
<div class='code' style='top:181.265px;'>    <span class='cm'> * 2 and 14 characters long.</span></div>
<div class='code' style='top:190.695px;'>    <span class='cm'> */</span></div>
<div class='code' style='top:209.555px;'>    <span class='an'>@NotNull</span></div>
<div class='code' style='top:218.985px;'>    <span class='an'>@Size</span>(min = <span class='nm'>2</span>, max = <span class='nm'>14</span>)</div>
<div class='code' style='top:228.415px;'>    <span class='kw'>private</span> String <span class='fd'>licensePlate</span>;</div>
<div class='code' style='top:247.275px;'>    <span class='cm'>/**</span></div>
<div class='code' style='top:256.705px;'>    <span class='cm'> * This int field shall have a value of at least 2.</span></div>
<div class='code' style='top:266.135px;'>    <span class='cm'> */</span></div>
<div class='code' style='top:275.565px;'>    <span class='an'>@Min</span>(<span class='nm'>2</span>)</div>
<div class='code' style='top:284.995px;'>    <span class='an'>@Past</span></div>
<div class='code' style='top:294.425px;'>    <span class='an'>@Valid</span></div>
<div class='code' style='top:303.855px;'>    <span class='kw'>private int</span> <span class='fd'>seatCount</span>;</div>
<div class='code' style='top:322.715px;'>    <span class='kw'>public</span> Car(String manufacturer, String licencePlate, <span class='kw'>int</span> seatCount) {</div>
<div class='code' style='top:341.575px;'>        <span class='kw'>this</span>.<span class='fd'>manufacturer</span> = manufacturer;</div>
<div class='code' style='top:351.005px;'>        <span class='kw'>this</span>.<span class='fd'>licensePlate</span> = licencePlate;</div>
<svg style='left:232.5px;top:97.46px' width='6.2' height='8' viewBox='0 0 6.2 8'><path d='M0.4 0.4v4.2l2.7 3 2.7-3v-4.2z' fill='#fff' stroke='#8c8c8c' stroke-width='0.7'/><path d='M1.7 3.2h2.8' stroke='#777' stroke-width='0.7'/></svg>
<svg style='left:232.5px;top:125.35px' width='6.2' height='8' viewBox='0 0 6.2 8'><path d='M0.4 7.6v-4.2l2.7-3 2.7 3v4.2z' fill='#fff' stroke='#8c8c8c' stroke-width='0.7'/><path d='M1.7 4.8h2.8' stroke='#777' stroke-width='0.7'/></svg>
<svg style='left:232.5px;top:163.47px' width='6.2' height='8' viewBox='0 0 6.2 8'><path d='M0.4 0.4v4.2l2.7 3 2.7-3v-4.2z' fill='#fff' stroke='#8c8c8c' stroke-width='0.7'/><path d='M1.7 3.2h2.8' stroke='#777' stroke-width='0.7'/></svg>
<svg style='left:232.5px;top:191.36px' width='6.2' height='8' viewBox='0 0 6.2 8'><path d='M0.4 7.6v-4.2l2.7-3 2.7 3v4.2z' fill='#fff' stroke='#8c8c8c' stroke-width='0.7'/><path d='M1.7 4.8h2.8' stroke='#777' stroke-width='0.7'/></svg>
<svg style='left:232.5px;top:210.62px' width='6.2' height='8' viewBox='0 0 6.2 8'><path d='M0.4 0.4v4.2l2.7 3 2.7-3v-4.2z' fill='#fff' stroke='#8c8c8c' stroke-width='0.7'/><path d='M1.7 3.2h2.8' stroke='#777' stroke-width='0.7'/></svg>
<svg style='left:232.5px;top:219.65px' width='6.2' height='8' viewBox='0 0 6.2 8'><path d='M0.4 7.6v-4.2l2.7-3 2.7 3v4.2z' fill='#fff' stroke='#8c8c8c' stroke-width='0.7'/><path d='M1.7 4.8h2.8' stroke='#777' stroke-width='0.7'/></svg>
<svg style='left:232.5px;top:248.34px' width='6.2' height='8' viewBox='0 0 6.2 8'><path d='M0.4 0.4v4.2l2.7 3 2.7-3v-4.2z' fill='#fff' stroke='#8c8c8c' stroke-width='0.7'/><path d='M1.7 3.2h2.8' stroke='#777' stroke-width='0.7'/></svg>
<svg style='left:232.5px;top:266.8px' width='6.2' height='8' viewBox='0 0 6.2 8'><path d='M0.4 7.6v-4.2l2.7-3 2.7 3v4.2z' fill='#fff' stroke='#8c8c8c' stroke-width='0.7'/><path d='M1.7 4.8h2.8' stroke='#777' stroke-width='0.7'/></svg>
<svg style='left:232.5px;top:276.63px' width='6.2' height='8' viewBox='0 0 6.2 8'><path d='M0.4 0.4v4.2l2.7 3 2.7-3v-4.2z' fill='#fff' stroke='#8c8c8c' stroke-width='0.7'/><path d='M1.7 3.2h2.8' stroke='#777' stroke-width='0.7'/></svg>
<svg style='left:232.5px;top:295.09px' width='6.2' height='8' viewBox='0 0 6.2 8'><path d='M0.4 7.6v-4.2l2.7-3 2.7 3v4.2z' fill='#fff' stroke='#8c8c8c' stroke-width='0.7'/><path d='M1.7 4.8h2.8' stroke='#777' stroke-width='0.7'/></svg>
<svg style='left:232.5px;top:323.78px' width='6.2' height='8' viewBox='0 0 6.2 8'><path d='M0.4 0.4v4.2l2.7 3 2.7-3v-4.2z' fill='#fff' stroke='#8c8c8c' stroke-width='0.7'/><path d='M1.7 3.2h2.8' stroke='#777' stroke-width='0.7'/></svg>
<div class='a' style='left:331.6px;top:304.12px;width:0.9px;height:8.4px;background:#000;'></div>
</div></div>
<div class='a' style='left:611.9px;top:77.3px;width:10.1px;height:282.7px;background:linear-gradient(90deg,#eceef1,#e2e4e9);'></div>
<div class='a' style='left:611.9px;top:86.9px;width:9.7px;height:263.5px;background:linear-gradient(90deg,#8e9198,#b0b3ba 35%,#d2d4d9 75%,#e0e2e6);border-radius:0 10.1px 10.1px 0 / 0 7px 7px 0;'></div>
<svg style='left:614.85px;top:81.1px' width='4.2' height='3.4' viewBox='0 0 4.2 3.4'><path d='M0 3.4h4.2l-2.1-3.4z' fill='#20242c'/></svg>
<svg style='left:614.85px;top:352.8px' width='4.2' height='3.4' viewBox='0 0 4.2 3.4'><path d='M0 0h4.2l-2.1 3.4z' fill='#20242c'/></svg>
<div class='a' style='left:611.9px;top:133px;width:9.7px;height:100.8px;box-sizing:border-box;border:1px solid #2f4f72;border-left:0.8px solid #5a7090;border-radius:0 10.1px 10.1px 0 / 0 8px 8px 0;background:linear-gradient(90deg,#b9cde4,#d4e2f1 50%,#f2f7fc);'></div>
<div class='a' style='left:622px;top:77.3px;width:8.2px;height:292.3px;background:#d9dce2;'></div>
<div class='a' style='left:623.2px;top:78px;width:6.2px;height:6.8px;background:#ffff00;border:0.5px solid #d8d890;box-sizing:border-box;'></div>
<div class='a' style='left:622.8px;top:243.6px;width:6.6px;height:1.9px;background:#e8e000;'></div>
<div class='a' style='left:622.8px;top:260px;width:6.6px;height:1.9px;background:#e8e000;'></div>
<div class='a' style='left:622.8px;top:273.6px;width:6.6px;height:1.9px;background:#e8e000;'></div>
<div class='a' style='left:622.8px;top:285.8px;width:6.6px;height:1.9px;background:#e8e000;'></div>
<div class='a' style='left:622.8px;top:299.2px;width:6.6px;height:1.9px;background:#e8e000;'></div>
<div class='a' style='left:622.8px;top:312.6px;width:6.6px;height:1.9px;background:#e8e000;'></div>
<div class='a' style='left:221.2px;top:360px;width:15px;height:9.6px;background:#d3d6dc;'></div>
<div class='a' style='left:236.2px;top:360.2px;width:375.8px;height:9.2px;background:linear-gradient(#eceef1,#e2e4e9);'></div>
<div class='a' style='left:245.8px;top:360.2px;width:356.6px;height:8.6px;background:linear-gradient(#969aa1,#b4b7be 35%,#d4d6db 75%,#e2e4e8);border-radius:0 0 7px 7px / 0 0 9.2px 9.2px;'></div>
<svg style='left:239.6px;top:362.7px' width='3.4' height='4.2' viewBox='0 0 3.4 4.2'><path d='M3.4 0v4.2l-3.4-2.1z' fill='#20242c'/></svg>
<svg style='left:605.2px;top:362.7px' width='3.4' height='4.2' viewBox='0 0 3.4 4.2'><path d='M0 0v4.2l3.4-2.1z' fill='#20242c'/></svg>
<div class='a' style='left:250px;top:360.2px;width:339px;height:8.6px;box-sizing:border-box;border:1px solid #2f4f72;border-top:none;border-radius:0 0 8px 8px / 0 0 9.2px 9.2px;background:linear-gradient(#b9cde4,#d4e2f1 50%,#f2f7fc);'></div>
<div class='a' style='left:612px;top:360px;width:10px;height:9.6px;background:#d6d9df;'></div>
<div class='a' style='left:220.4px;top:369.6px;width:410.6px;height:0.7px;background:#9aa0ab;'></div>
<svg style='left:498.8px;top:307.2px' width='9' height='13' viewBox='0 0 9 13'><path d='M0.6 0.6v9.6l2.2-2 1.7 3.6 1.5-.7-1.7-3.5h3.1z' fill='#fff' stroke='#000' stroke-width='1' stroke-linejoin='round'/></svg>
<div class='a' style='left:633.4px;top:63.2px;width:12.6px;height:78.8px;box-sizing:border-box;border:0.8px solid #9a9fa9;border-radius:2.5px;background:linear-gradient(90deg,#e4e5e8,#f3f3f5 50%,#e9eaec);'></div>
<div class='a' style='left:639.4px;top:80.6px;width:0;height:0;'><div style='position:absolute;white-space:nowrap;line-height:10px;height:10px;left:0;top:-5px;transform-origin:0 50%;transform:rotate(90deg);color:#111;font-size:7.9px;'><u>2</u>: Commander</div></div>
<div class='a' style='left:633.4px;top:147.8px;width:12.6px;height:54.4px;box-sizing:border-box;border:0.8px solid #9a9fa9;border-radius:2.5px;background:linear-gradient(90deg,#e4e5e8,#f3f3f5 50%,#e9eaec);'></div>
<div class='a' style='left:639.4px;top:163.6px;width:0;height:0;'><div style='position:absolute;white-space:nowrap;line-height:10px;height:10px;left:0;top:-5px;transform-origin:0 50%;transform:rotate(90deg);color:#111;font-size:7.9px;'>Ant Build</div></div>
<div class='a' style='left:633.4px;top:207.8px;width:12.6px;height:84.2px;box-sizing:border-box;border:0.8px solid #9a9fa9;border-radius:2.5px;background:linear-gradient(90deg,#e4e5e8,#f3f3f5 50%,#e9eaec);'></div>
<div class='a' style='left:639.4px;top:227.4px;width:0;height:0;'><div style='position:absolute;white-space:nowrap;line-height:10px;height:10px;left:0;top:-5px;transform-origin:0 50%;transform:rotate(90deg);color:#111;font-size:7.9px;'>Maven Projects</div></div>
<svg style='left:635.2px;top:69.8px' width='9' height='9' viewBox='0 0 9 9'><ellipse cx='4.5' cy='4.5' rx='4' ry='4.2' fill='#3a7a3a' stroke='#244a24' stroke-width='0.6'/><rect x='1.6' y='2.6' width='5.8' height='1.8' fill='#d03a2a'/><rect x='1.6' y='5' width='5.8' height='1.8' fill='#f0b030'/><rect x='2.6' y='0.8' width='3.8' height='1.4' fill='#4a9a4a'/></svg>
<svg style='left:635px;top:153px' width='9' height='9' viewBox='0 0 9 9'><ellipse cx='4.5' cy='4.5' rx='1.5' ry='3.6' fill='#8a3ad8'/><path d='M0.6 1.6l3 2.6M8.4 1.6l-3 2.6M0.4 4.8h8.2M0.6 8l3-2.6M8.4 8l-3-2.6' stroke='#9a5ae0' stroke-width='0.7'/></svg>
<svg style='left:635px;top:215px' width='9' height='9' viewBox='0 0 9 9'><circle cx='4.5' cy='4.5' r='3.5' fill='#dbe6fa' stroke='#4a72d8' stroke-width='1.4' stroke-dasharray='1.2 0.7'/><circle cx='4.5' cy='4.5' r='2.2' fill='#fff' stroke='#4a72d8' stroke-width='0.7'/><circle cx='4.5' cy='4.5' r='0.9' fill='#5a82e8'/></svg>
<div class='a' style='left:18.4px;top:376px;width:0.8px;height:91.4px;background:#9aa0ab;'></div>
<div class='a' style='left:19px;top:375.4px;width:597px;height:9.4px;background:#b4b2a7;'></div>
<div class='t' style='left:19.6px;top:376px;color:#fff;font-size:7.9px;'>Messages <b>Make</b></div>
<div class='a' style='left:574.6px;top:375.8px;width:0.9px;height:8.6px;background:#cdcbc2;'></div>
<div class='a' style='left:588.4px;top:375.8px;width:0.9px;height:8.6px;background:#cdcbc2;'></div>
<div class='a' style='left:601.8px;top:375.8px;width:0.9px;height:8.6px;background:#cdcbc2;'></div>
<div class='a' style='left:565.6px;top:377.3px;width:7px;height:5.6px;box-sizing:border-box;border:0.7px solid #ecebe6;background:#c4c2b8;box-shadow:-0.6px 0.7px 0 #dddcd5;'></div>
<div class='a' style='left:577.2px;top:377.5px;width:7.6px;height:5.2px;box-sizing:border-box;border:0.7px solid #ecebe6;background:#c2c0b6;'></div>
<div class='a' style='left:579.2px;top:379px;width:3.6px;height:2.2px;box-sizing:border-box;border:0.5px solid #e4e3dd;'></div>
<svg style='left:592px;top:377px' width='7' height='6.6' viewBox='0 0 7 6.6'><path d='M0.5 6.2l2.6-2.6' stroke='#6a6960' stroke-width='0.8'/><path d='M2.6 2.2l2.2 2.2M4 0.6l2.2 2.2' stroke='#5a5950' stroke-width='0.7'/><path d='M3 2.6l1.6-1.4 1.4 1.4-1.4 1.6z' fill='#efeeea'/></svg>
<div class='a' style='left:605.6px;top:380.6px;width:7.2px;height:1.7px;background:#e9e8e3;'></div>
<div class='a' style='left:616px;top:375.4px;width:14.4px;height:9.4px;background:linear-gradient(#f1f2f5,#e6e8ec);'></div>
<svg style='left:619.8px;top:376.8px' width='7' height='7' viewBox='0 0 7 7'><path d='M3.5 0.2v4M1.4 2.4l2.1 2.1 2.1-2.1z' stroke='#868c96' fill='#868c96' stroke-width='0.9'/><path d='M0.2 6.2h6.6' stroke='#868c96' stroke-width='1'/></svg>
<div class='a' style='left:630.4px;top:376px;width:0.7px;height:91.4px;background:#a2a7b1;'></div>
<svg style='left:22.4px;top:389.6px' width='8' height='7' viewBox='0 0 8 7'><path d='M0 0l3.8 3.4-3.8 3.4zM4 0l3.8 3.4-3.8 3.4z' fill='#2fae3a'/></svg>
<div class='a' style='left:22.8px;top:405px;width:7.2px;height:7.2px;background:#8e8e8e;border:0.6px solid #a8a8a8;box-sizing:border-box;'></div>
<svg style='left:22.6px;top:420.4px' width='7.6' height='7.6' viewBox='0 0 7.6 7.6'><path d='M0.8 0.8l6 6M6.8 0.8l-6 6' stroke='#e0242a' stroke-width='1.8'/></svg>
<svg style='left:22.4px;top:435.4px' width='8' height='8.6' viewBox='0 0 8 8.6'><path d='M4 0.4l3.6 4h-2.2v3.8h-2.8v-3.8h-2.2z' fill='#4a8ef0' stroke='#1e4ea8' stroke-width='0.6'/></svg>
<svg style='left:24px;top:459.6px' width='5' height='4' viewBox='0 0 5 4'><path d='M0.4 0.4l1.6 1.6-1.6 1.6M2.8 0.4l1.6 1.6-1.6 1.6' stroke='#2a3a8a' stroke-width='0.8' fill='none'/></svg>
<svg style='left:38px;top:388px' width='9' height='10' viewBox='0 0 9 10'><rect x='0.4' y='0.4' width='8' height='0.9' fill='#5b7fb0'/><rect x='0.4' y='8.7' width='8' height='0.9' fill='#5b7fb0'/><path d='M4.4 1.8l-2 2.6h4zM4.4 8.2l-2-2.6h4z' fill='#3b7be0'/></svg>
<svg style='left:38px;top:403.6px' width='9' height='10' viewBox='0 0 9 10'><path d='M0.2 5h8.6' stroke='#5b7fb0' stroke-width='0.9'/><path d='M4.4 3.8l-2-2.8h4zM4.4 6.2l-2 2.8h4z' fill='#3b8be0'/></svg>
<svg style='left:38.6px;top:419.6px' width='9' height='9' viewBox='0 0 9 9'><circle cx='4' cy='4' r='3.6' fill='#b8bcc2' stroke='#6a6e76' stroke-width='0.7'/><rect x='3.3' y='1.4' width='1.4' height='3.6' fill='#fff'/><circle cx='6.6' cy='6.6' r='2.2' fill='#e0242a'/><rect x='5.4' y='6.2' width='2.4' height='0.9' fill='#fff'/></svg>
<svg style='left:37.6px;top:435px' width='10' height='9.4' viewBox='0 0 10 9.4'><path d='M0.5 5.6h9v3.4h-9z' fill='#f4c83e' stroke='#b98a1c' stroke-width='0.6'/><path d='M5 6.6l-3-3.2h1.8v-3h2.4v3h1.8z' fill='#3b7be0' stroke='#1e4ea8' stroke-width='0.5'/></svg>
<svg style='left:37.6px;top:450.4px' width='10' height='10' viewBox='0 0 10 10'><path d='M1.2 9l5-5.6' stroke='#3a62c0' stroke-width='1.8' stroke-linecap='round'/><path d='M5.2 1.4a2.3 2.3 0 1 0 3.4 2.4l-1.6.3-.8-1 .6-1.5z' fill='#4a74d0'/><circle cx='6.4' cy='7.4' r='2.1' fill='#f2c23a' stroke='#a87a14' stroke-width='0.6'/><circle cx='6.4' cy='7.4' r='0.7' fill='#fff6d0'/></svg>
<div class='a' style='left:51.8px;top:386.2px;width:567.4px;height:69.8px;background:#fff;border-radius:1.5px 0 0 0;'></div>
<div class='a' style='left:51.2px;top:386px;width:0.6px;height:80px;background:#b6bac3;'></div>
<div class='a' style='left:51.6px;top:386.2px;width:567.6px;height:69.8px;overflow:hidden;'><div class='a' style='left:-51.6px;top:-386.2px;width:650px;height:501px;'>
<svg style='left:63px;top:381.1px' width='8.6' height='8.6' viewBox='0 0 8.6 8.6'><circle cx='4.3' cy='4.3' r='3.7' fill='#d3e6fb' stroke='#3486de' stroke-width='1.1'/><circle cx='4.3' cy='5.4' r='2.4' fill='#b4d4f6' opacity='.7'/><rect x='3.6' y='3.7' width='1.4' height='3' fill='#1f62cc'/><rect x='3.6' y='1.8' width='1.4' height='1.3' fill='#1f62cc'/></svg>
<div class='t' style='left:75.4px;top:381.7px;color:#111;font-size:7.85px;'>Information: Compilation completed with 4 errors and 0 warnings</div>
<svg style='left:63px;top:391.9px' width='8.6' height='8.6' viewBox='0 0 8.6 8.6'><circle cx='4.3' cy='4.3' r='3.7' fill='#d3e6fb' stroke='#3486de' stroke-width='1.1'/><circle cx='4.3' cy='5.4' r='2.4' fill='#b4d4f6' opacity='.7'/><rect x='3.6' y='3.7' width='1.4' height='3' fill='#1f62cc'/><rect x='3.6' y='1.8' width='1.4' height='1.3' fill='#1f62cc'/></svg>
<div class='t' style='left:75.4px;top:392.5px;color:#111;font-size:7.85px;'>Information: 4 errors</div>
<svg style='left:63px;top:402.7px' width='8.6' height='8.6' viewBox='0 0 8.6 8.6'><circle cx='4.3' cy='4.3' r='3.7' fill='#d3e6fb' stroke='#3486de' stroke-width='1.1'/><circle cx='4.3' cy='5.4' r='2.4' fill='#b4d4f6' opacity='.7'/><rect x='3.6' y='3.7' width='1.4' height='3' fill='#1f62cc'/><rect x='3.6' y='1.8' width='1.4' height='1.3' fill='#1f62cc'/></svg>
<div class='t' style='left:75.4px;top:403.3px;color:#111;font-size:7.85px;'>Information: 0 warnings</div>
<svg style='left:54.5px;top:416.2px' width='5' height='4' viewBox='0 0 5 4'><path d='M0 0h5l-2.5 4z' fill='#4f555e'/></svg>
<svg style='left:63px;top:413.6px' width='8.6' height='8.6' viewBox='0 0 8.6 8.6'><rect x='0.4' y='0.4' width='7.8' height='7.8' fill='#a9c6f0' stroke='#4a78c4' stroke-width='0.8'/><rect x='1.3' y='1.3' width='6' height='6' fill='#c9dcf6'/><path d='M3.2 2h1.5v3.2c0 .9-.5 1.3-1.3 1.3h-.8' fill='none' stroke='#2456b4' stroke-width='1.1'/><rect x='5.6' y='2' width='1.2' height='4.4' fill='#2456b4'/></svg>
<div class='t' style='left:75.2px;top:414.1px;color:#111;font-size:7.8px;'><b>/home/morling/hv_annotation_processor_demo/src/main/java/org/hibernate/validator/ap/demo/Car.java</b></div>
<svg style='left:73px;top:424.4px' width='8.4' height='8.4' viewBox='0 0 8.4 8.4'><circle cx='4.2' cy='4.2' r='3.9' fill='#e83a24' stroke='#a81c10' stroke-width='0.6'/><circle cx='3.6' cy='3.2' r='2.2' fill='#f87a60' opacity='.7'/><rect x='3.55' y='1.6' width='1.3' height='3.3' fill='#fff'/><rect x='3.55' y='5.5' width='1.3' height='1.2' fill='#fff'/></svg>
<div class='t' style='left:85.4px;top:424.9px;color:#111;font-size:7.9px;'>Error:(56, 5)&nbsp; Fields of a primitive type must not annotated with @Valid.</div>
<svg style='left:73px;top:435.2px' width='8.4' height='8.4' viewBox='0 0 8.4 8.4'><circle cx='4.2' cy='4.2' r='3.9' fill='#e83a24' stroke='#a81c10' stroke-width='0.6'/><circle cx='3.6' cy='3.2' r='2.2' fill='#f87a60' opacity='.7'/><rect x='3.55' y='1.6' width='1.3' height='3.3' fill='#fff'/><rect x='3.55' y='5.5' width='1.3' height='1.2' fill='#fff'/></svg>
<div class='t' style='left:85.4px;top:435.7px;color:#111;font-size:7.9px;'>Error:(70, 5)&nbsp; Constraint annotations must not be specified at methods, which are no valid JavaBeans getter methods.</div>
<svg style='left:73px;top:446px' width='8.4' height='8.4' viewBox='0 0 8.4 8.4'><circle cx='4.2' cy='4.2' r='3.9' fill='#e83a24' stroke='#a81c10' stroke-width='0.6'/><circle cx='3.6' cy='3.2' r='2.2' fill='#f87a60' opacity='.7'/><rect x='3.55' y='1.6' width='1.3' height='3.3' fill='#fff'/><rect x='3.55' y='5.5' width='1.3' height='1.2' fill='#fff'/></svg>
<div class='t' style='left:85.4px;top:446.5px;color:#111;font-size:7.9px;'>Error:(55, 5)&nbsp; The annotation @Past is disallowed for this data type.</div>
</div></div>
<div class='a' style='left:619.2px;top:386.2px;width:9.8px;height:69.8px;background:linear-gradient(90deg,#eceef1,#e2e4e9);'></div>
<div class='a' style='left:619.2px;top:395.8px;width:9.4px;height:50.6px;background:linear-gradient(90deg,#8e9198,#b0b3ba 35%,#d2d4d9 75%,#e0e2e6);border-radius:0 9.8px 9.8px 0 / 0 7px 7px 0;'></div>
<svg style='left:622px;top:390px' width='4.2' height='3.4' viewBox='0 0 4.2 3.4'><path d='M0 3.4h4.2l-2.1-3.4z' fill='#20242c'/></svg>
<svg style='left:622px;top:448.8px' width='4.2' height='3.4' viewBox='0 0 4.2 3.4'><path d='M0 0h4.2l-2.1 3.4z' fill='#20242c'/></svg>
<div class='a' style='left:619.2px;top:424.4px;width:9.4px;height:17.4px;box-sizing:border-box;border:1px solid #2f4f72;border-left:0.8px solid #5a7090;border-radius:0 9.8px 9.8px 0 / 0 8px 8px 0;background:linear-gradient(90deg,#b9cde4,#d4e2f1 50%,#f2f7fc);'></div>
<div class='a' style='left:51.8px;top:456px;width:567.4px;height:9.8px;background:linear-gradient(#eceef1,#e2e4e9);'></div>
<div class='a' style='left:61.4px;top:456px;width:548.2px;height:9.2px;background:linear-gradient(#969aa1,#b4b7be 35%,#d4d6db 75%,#e2e4e8);border-radius:0 0 7px 7px / 0 0 9.8px 9.8px;'></div>
<svg style='left:55.2px;top:458.8px' width='3.4' height='4.2' viewBox='0 0 3.4 4.2'><path d='M3.4 0v4.2l-3.4-2.1z' fill='#20242c'/></svg>
<svg style='left:612.4px;top:458.8px' width='3.4' height='4.2' viewBox='0 0 3.4 4.2'><path d='M0 0v4.2l3.4-2.1z' fill='#20242c'/></svg>
<div class='a' style='left:64px;top:456px;width:545px;height:9.2px;box-sizing:border-box;border:1px solid #2f4f72;border-top:none;border-radius:0 0 8px 8px / 0 0 9.8px 9.8px;background:linear-gradient(#b9cde4,#d4e2f1 50%,#f2f7fc);'></div>
<div class='a' style='left:619.2px;top:456px;width:11px;height:9.8px;background:#d6d9df;'></div>
<div class='a' style='left:18.4px;top:467px;width:612.6px;height:0.8px;background:#a2a7b1;'></div>
<div class='a' style='left:5.4px;top:397px;width:11.4px;height:69.4px;box-sizing:border-box;border:0.8px solid #9a9fa9;border-radius:2.5px;background:linear-gradient(90deg,#e4e5e8,#f3f3f5 50%,#e9eaec);'></div>
<div class='a' style='left:11.4px;top:449px;width:0;height:0;'><div style='position:absolute;white-space:nowrap;line-height:10px;height:10px;left:0;top:-5px;transform-origin:0 50%;transform:rotate(-90deg);color:#111;font-size:7.9px;'><u>Z</u>: Structure</div></div>
<svg style='left:7px;top:452px' width='9' height='9' viewBox='0 0 9 9'><circle cx='2.4' cy='3' r='2' fill='#f0a030' stroke='#a86a10' stroke-width='0.4'/><circle cx='6.2' cy='3' r='2' fill='#f4d060' stroke='#a88a10' stroke-width='0.4'/><circle cx='4.2' cy='6.4' r='2.2' fill='#e050d0' stroke='#902a88' stroke-width='0.4'/></svg>
<div class='a' style='left:17.4px;top:470.4px;width:50.8px;height:11.2px;box-sizing:border-box;border:0.8px solid #a9aeb8;border-radius:2px;background:linear-gradient(#f6f6f7,#e9eaed);'></div>
<div class='a' style='left:73.4px;top:470.2px;width:71.6px;height:11.4px;box-sizing:border-box;border:0.9px solid #3c3c3c;border-radius:2px;background:linear-gradient(#d0d0d0,#e2e2e2 50%,#cfcfcf);'></div>
<div class='t' style='left:34.8px;top:471.9px;color:#111;font-size:7.5px;'><u>6</u>: TODO</div>
<div class='t' style='left:90.6px;top:471.9px;color:#111;'><u>0</u>: Messages</div>
<svg style='left:23px;top:471.6px' width='9.4' height='9' viewBox='0 0 9.4 9'><path d='M0.4 0.8h4.2v3.2h-2l-1.2 1.2v-1.2h-1z' fill='#dfeaf8' stroke='#7f9cc8' stroke-width='0.5'/><path d='M3.2 8.8c0-1.8 1.2-2.6 2.8-2.6s2.8.8 2.8 2.6z' fill='#2f7fe0'/><circle cx='6' cy='4.2' r='2.3' fill='#f3c79a'/><path d='M3.7 3.8c0-1.8 1-2.8 2.5-2.8s2.4 1 2.3 2.6c-.8-.2-1.4-.8-1.7-1.4-.6.9-1.7 1.5-3.1 1.6z' fill='#9a5a1e'/></svg>
<svg style='left:80px;top:472.4px' width='7.6' height='7.6' viewBox='0 0 7.6 7.6'><rect x='0.4' y='0.4' width='6.8' height='6.8' fill='#f6e9a0' stroke='#c8b45a' stroke-width='0.7'/><path d='M2 2.4h3.4M3.7 2.4v3.4' stroke='#d8c46a' stroke-width='0.9'/></svg>
<div class='a' style='left:2.8px;top:482.6px;width:644.4px;height:0.9px;background:#b1b5be;'></div>
<div class='a' style='left:2.8px;top:483.5px;width:644.4px;height:13.9px;background:linear-gradient(#e3e5ea,#d6d9df 60%,#d0d3da);'></div>
<div class='a' style='left:267px;top:484.4px;width:0.8px;height:12.6px;background:#a7acb6;box-shadow:0.8px 0 0 #f0f1f4;'></div>
<div class='a' style='left:373px;top:484.4px;width:0.8px;height:12.6px;background:#a7acb6;box-shadow:0.8px 0 0 #f0f1f4;'></div>
<div class='a' style='left:387px;top:484.4px;width:0.8px;height:12.6px;background:#a7acb6;box-shadow:0.8px 0 0 #f0f1f4;'></div>
<div class='a' style='left:436px;top:484.4px;width:0.8px;height:12.6px;background:#a7acb6;box-shadow:0.8px 0 0 #f0f1f4;'></div>
<div class='a' style='left:505px;top:484.4px;width:0.8px;height:12.6px;background:#a7acb6;box-shadow:0.8px 0 0 #f0f1f4;'></div>
<div class='a' style='left:525px;top:484.4px;width:0.8px;height:12.6px;background:#a7acb6;box-shadow:0.8px 0 0 #f0f1f4;'></div>
<div class='a' style='left:536px;top:484.4px;width:0.8px;height:12.6px;background:#a7acb6;box-shadow:0.8px 0 0 #f0f1f4;'></div>
<div class='a' style='left:551px;top:484.4px;width:0.8px;height:12.6px;background:#a7acb6;box-shadow:0.8px 0 0 #f0f1f4;'></div>
<svg style='left:269.4px;top:485.6px' width='8' height='8' viewBox='0 0 8 8'><circle cx='4' cy='4' r='2.6' fill='none' stroke='#bcc0c8' stroke-width='1.8' stroke-dasharray='1.2 0.8'/><circle cx='4' cy='4' r='1' fill='#e6e8ec'/></svg>
<div class='t' style='left:282px;top:485.9px;color:#111;'>57:22</div>
<div class='t' style='left:390.4px;top:485.9px;color:#111;'>Insert</div>
<div class='t' style='left:439.2px;top:485.9px;color:#111;'>UTF-8</div>
<svg style='left:507.6px;top:485px' width='9.4' height='9.6' viewBox='0 0 9.4 9.6'><path d='M1.4 3.4c0-1.8 1.4-3 3.3-3s3.3 1.2 3.3 3z' fill='#2a3a5a'/><rect x='0.6' y='3.2' width='8.2' height='1.2' fill='#1e2a44'/><circle cx='4.7' cy='5.6' r='2.2' fill='#f4c8a0'/><path d='M1.6 9.4c0-1.6 1.4-2.4 3.1-2.4s3.1.8 3.1 2.4z' fill='#3a5a9a'/><rect x='3.9' y='1.2' width='1.6' height='1.4' fill='#f0c030'/></svg>
<div class='a' style='left:553.4px;top:485px;width:9.4px;height:9.6px;box-sizing:border-box;border:0.7px solid #b9bdc6;background:#e2e4e9;border-radius:1px;'></div>
<div class='a' style='left:567px;top:484.6px;width:64.4px;height:12px;box-sizing:border-box;border:0.7px solid #aab0be;background:linear-gradient(90deg,#7e92e6 0,#8496e8 66%,#eceef2 66%,#f0f1f4);'></div>
<div class='t' style='left:571.8px;top:486.1px;color:#111;'>138M of 217M</div>
<svg style='left:634.2px;top:485.8px' width='9' height='10.6' viewBox='0 0 9 10.6'><ellipse cx='4.6' cy='2.2' rx='3.6' ry='1.7' fill='#dce6fa' stroke='#3a5aa8' stroke-width='0.7'/><path d='M1.2 2.6l.8 6.6c.2 1 5 1 5.2 0l.8-6.6' fill='#8aa6e8' stroke='#3a5aa8' stroke-width='0.7'/><path d='M3 4v5M4.6 4.2v5M6.2 4v5' stroke='#c6d6f8' stroke-width='0.6'/></svg>
</body></html>
